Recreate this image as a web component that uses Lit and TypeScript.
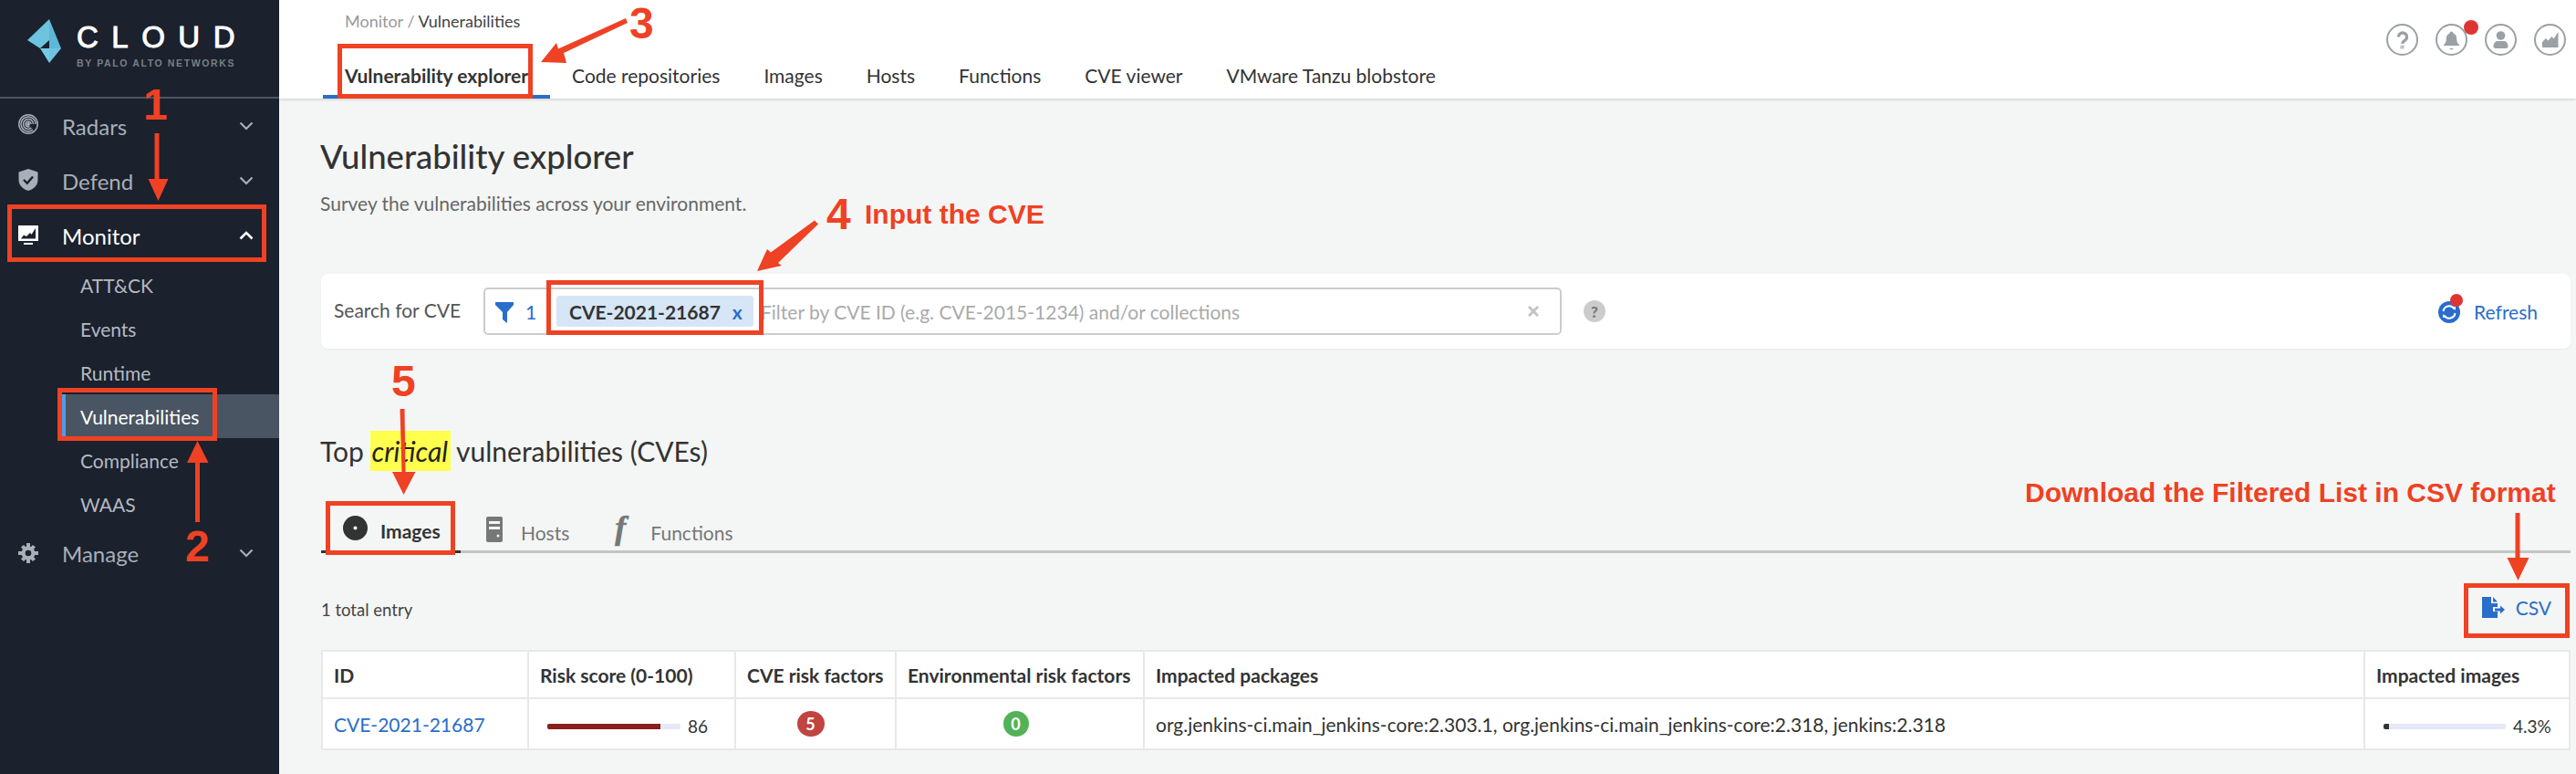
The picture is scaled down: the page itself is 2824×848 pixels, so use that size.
import { LitElement, html, css, svg } from "lit";
import { customElement } from "lit/decorators.js";

const chevDown = html`<svg class="chev" viewBox="0 0 16 10" width="16" height="10"><path d="M1.500 1.500 8 8l6.500-6.500" fill="none" stroke="currentColor" stroke-width="2.200"/></svg>`;
const chevUp = html`<svg class="chev up" viewBox="0 0 16 10" width="16" height="10"><path d="M1.500 8.500 8 2l6.500 6.500" fill="none" stroke="currentColor" stroke-width="2.600"/></svg>`;

const radarIcon = html`<svg class="nav-ico" style="margin-top:-4px" viewBox="0 0 22 24" width="22" height="24" fill="none" stroke="#a9afb8" stroke-width="1.500"><circle cx="11" cy="12" r="10.200"/><path d="M19 12a8 8 0 1 0-3 6.200M16.500 12a5.500 5.500 0 1 0-2 4.200M14 12a3 3 0 1 0-1.500 2.600"/><circle cx="11" cy="12" r="1.200" fill="#a9afb8"/></svg>`;
const shieldIcon = html`<svg class="nav-ico" style="margin-top:-2px" viewBox="0 0 22 24" width="22" height="24"><path d="M11 0 21.500 3.500V12c0 6-4.500 10-10.500 12C5 22 .5 18 .5 12V3.500Z" fill="#a9afb8"/><path d="M6 12l3.800 3.800L16 8.500" fill="none" stroke="#1b212d" stroke-width="2.400"/></svg>`;
const monitorIcon = html`<svg class="nav-ico" viewBox="0 0 22 24" width="22" height="24"><path d="M0 1h22v17H0Z" fill="#fff"/><path d="M3 15.500l3-4 3 1.500 4-4 1.500 2L19 4v11.500Z" fill="#1b212d"/><path d="M6 20h10v2H6Z" fill="#fff"/></svg>`;
const gearIcon = html`<svg class="nav-ico" viewBox="0 0 22 24" width="22" height="24"><g fill="#a9afb8"><circle cx="11" cy="12" r="7.500"/><path d="M9 1h4v4H9zM9 19h4v4H9zM0 10h4v4H0zM18 10h4v4h-4z"/><path d="M3 5.500 6 3l3 3-3 3zM19 5.500 16 3l-3 3 3 3zM3 18.500 6 21l3-3-3-3zM19 18.500 16 21l-3-3 3-3z"/></g><circle cx="11" cy="12" r="3.300" fill="#1b212d"/></svg>`;

const topIcons = [
  svg`<path d="M13.500 14.500a4.500 4.500 0 1 1 7 3.700c-1.900 1.200-2.700 1.800-2.700 3.800" fill="none" stroke="#9aa0a4" stroke-width="3.200"/><rect x="15.300" y="23.500" width="4.400" height="4" fill="#c3c6c8"/>`,
  svg`<path d="M17.500 8.500c1.200 0 2 .8 2 2 2.700.9 3.700 3.300 3.700 6 0 3 .8 5 2.800 6.500v1H9v-1c2-1.500 2.800-3.500 2.800-6.500 0-2.700 1-5.100 3.700-6 0-1.200.8-2 2-2Z" fill="#9aa0a4"/><path d="M15 27h5l-2.500 1.800Z" fill="#9aa0a4"/>`,
  svg`<circle cx="17.500" cy="13" r="4.800" fill="#9aa0a4"/><path d="M9.500 25c0-4.300 2.500-6 4.500-6h7c2 0 4.500 1.700 4.500 6 0 1.200-1 2-2.500 2H12c-1.500 0-2.500-.8-2.500-2Z" fill="#9aa0a4"/>`,
  svg`<path d="M9 26V20l4-4 2.500 2.500 4-4.500 2 2.500L26.500 9V26Z" fill="#9aa0a4"/>`,
];

type Box = [number, number, number, number];
const boxes: Box[] = [
  [8, 224, 284, 63],
  [63, 425, 175, 58],
  [370, 48, 214, 60],
  [599, 307, 238, 60],
  [357, 549, 142, 59],
  [2701, 639, 116, 60],
];
const numbers: [string, number, number][] = [
  ["1", 157, 91],
  ["2", 203, 575],
  ["3", 690, 2],
  ["4", 906, 211],
  ["5", 429, 394],
];

@customElement("app-root")
export class AppRoot extends LitElement {
  static styles = css`
    :host { display: block; width: 2824px; height: 848px; font-family: Lato, "Liberation Sans", sans-serif; color: #333; }
    * { box-sizing: border-box; }
    .page { position: relative; display: flex; width: 2824px; height: 848px; overflow: hidden; background: #f4f6f5; }

    .side { width: 306px; flex: none; background: #1b212d; color: #a9afb8; position: relative; }
    .brand { height: 108px; border-bottom: 2px solid #4d5560; display: flex; align-items: flex-start; padding: 20px 0 0 30px; gap: 17px; }
    .brand-text { display: flex; flex-direction: column; padding-top: 5px; }
    .cloud { font: 400 33px/32px "Liberation Sans", sans-serif; color: #fff; letter-spacing: 14.500px; white-space: nowrap; -webkit-text-stroke: 1px #fff; }
    .by { font: 700 10.500px/12px "Liberation Sans", sans-serif; color: #7b7f85; letter-spacing: 1.620px; white-space: nowrap; margin-top: 6px; }
    .nav { display: flex; flex-direction: column; }
    .top-item { height: 60px; display: flex; align-items: center; padding-left: 20px; font-size: 24px; }
    .top-item .nav-ico { flex: none; }
    .top-item .label { margin-left: 26px; flex: 1; }
    .top-item.open { color: #fff; }
    .chev { margin-right: 28px; flex: none; }
    .sub { height: 48px; display: flex; align-items: center; padding-left: 88px; font-size: 21px; color: #b4bac3; }
    .sub.on { background: #4a5563; color: #fff; border-left: 4px solid #4f9ceb; margin-left: 68px; padding-left: 16px; }
    .collapse { position: absolute; left: 306px; top: 0; width: 24px; height: 16px; background: #5aa5ea; border-bottom-right-radius: 6px; display: flex; justify-content: center; }

    .main { flex: 1; min-width: 0; display: flex; flex-direction: column; }
    .head { height: 108px; background: #fff; box-shadow: 0 1px 3px rgba(0,0,0,.18); padding: 11px 0 0 72px; position: relative; flex: none; }
    .crumb { font-size: 18px; line-height: 24px; color: #999; }
    .crumb b { font-weight: 400; color: #444; }
    .tabs { display: flex; margin: 26px 0 0 -24px; }
    .tab { font-size: 21px; line-height: 44px; height: 47px; padding: 0 24px; color: #333; white-space: nowrap; }
    .tab.on { font-weight: 700; border-bottom: 4px solid #2a6dcb; }
    .tools { position: absolute; right: 11px; top: 26px; display: flex; gap: 19px; }
    .tool { width: 35px; height: 35px; position: relative; }
    .dot { position: absolute; top: -4px; left: 31px; width: 16px; height: 16px; border-radius: 50%; background: #dd3632; }

    .content { flex: 1; padding: 41px 6px 0 45px; display: flex; flex-direction: column; }
    h1 { margin: 0; font-size: 36.500px; font-weight: 500; line-height: 44px; color: #333; }
    .subtitle { font-size: 21px; line-height: 30px; color: #666; margin-top: 15px; }
    .card { margin: 62px 0 0 1px; height: 82px; background: #fff; border-radius: 8px; box-shadow: 0 1px 2px rgba(0,0,0,.05); display: flex; align-items: center; padding-left: 14px; }
    .card-label { font-size: 21px; color: #555; width: 164px; margin-top: -3px; }
    .input { width: 1182px; height: 52px; border: 2px solid #ccc; border-radius: 5px; display: flex; align-items: center; padding-left: 11px; }
    .count { color: #2a6dcb; font-size: 21px; margin-left: 13px; width: 34px; }
    .chip { width: 216px; height: 34px; background: #d6e6f7; border-radius: 3px; display: flex; align-items: center; padding-left: 14px; gap: 13px; font-size: 21px; font-weight: 700; color: #333; margin-right: 8px; flex: none; }
    .chip i { font-style: normal; color: #2a6dcb; }
    .ph { color: #aaa; font-size: 21px; flex: 1; white-space: nowrap; }
    .clear { margin-right: 23px; flex: none; }
    .help { margin-left: 24px; width: 24px; height: 24px; border-radius: 50%; background: #ccc; color: #777; font-size: 17px; font-weight: 900; display: flex; align-items: center; justify-content: center; }
    .refresh { margin-left: auto; margin-right: 36px; display: flex; align-items: center; gap: 12px; color: #2a6dcb; font-size: 21px; }

    h2 { margin: 90px 0 0; font-size: 30px; font-weight: 400; line-height: 44px; color: #333; white-space: nowrap; }
    h2 em { background: #ffff4d; padding: 0 3px 0 2px; margin: 0 -1px; font-style: italic; color: #222; display: inline-block; }
    .subtabs { margin: 33px 0 0 1px; height: 57px; border-bottom: 3px solid #c4c4c4; display: flex; }
    .st { display: flex; align-items: center; height: 57px; font-size: 21px; color: #777; padding-top: 4px; }
    .st span { margin-top: 7px; }
    .st.on { width: 153px; padding-left: 24px; gap: 14px; font-weight: 700; color: #333; border-bottom: 3px solid #333; }
    .st.hosts { margin-left: 28px; gap: 20px; }
    .st.funcs { margin-left: 50px; gap: 19px; }
    .st .fn { font: italic 700 36px/36px "Liberation Serif", serif; color: #777; width: 20px; margin-top: -4px; -webkit-text-stroke: .6px #777; }
    .bar-row { margin: 33px 0 0 1px; height: 58px; display: flex; align-items: center; justify-content: space-between; }
    .total { font-size: 18.500px; color: #444; }
    .csv { display: flex; align-items: center; gap: 12px; color: #2a6dcb; font-size: 21px; padding-right: 21px; margin-top: -5px; }

    .table { margin: 15px 0 0 1px; width: 2466px; display: grid; grid-template-columns: 224px 225px 174px 270px 1336px 223px; gap: 2px; padding: 2px; background: #e8e8e8; }
    .th, .td { background: #fff; display: flex; align-items: center; padding-left: 12px; font-size: 21px; white-space: nowrap; }
    .th { height: 50px; font-weight: 700; color: #333; }
    .td { height: 54px; color: #333; }
    .link { color: #2a6dcb; }
    .risk { padding-left: 20px; }
    .track { height: 6px; background: #e4e8f8; border-radius: 2px; margin-right: 8px; margin-top: 6px; }
    .fill { height: 6px; border-radius: 2px 0 0 2px; }
    .val { font-size: 19px; margin-top: 4px; }
    .center { justify-content: center; padding-left: 0; }
    .shift-a { padding-right: 11px; }
    .shift-b { padding-right: 9px; }
    .badge { width: 30px; height: 28px; border-radius: 50%; color: #fff; font-size: 18px; font-weight: 700; display: flex; align-items: center; justify-content: center; }
    .red { background: #c0443f; }
    .green { background: #52b257; width: 28px; }

    .overlay { position: absolute; left: 0; top: 0; pointer-events: none; }
    .rbox { position: absolute; border: 5px solid #ef4123; }
    .num { position: absolute; font: 700 48px/48px "Liberation Sans", sans-serif; color: #ef4123; }
    .note { position: absolute; font: 700 30px/32px "Liberation Sans", sans-serif; color: #ef4123; white-space: nowrap; }
  `;

  render() {
    return html`
      <div class="page">
        <aside class="side">
          <div class="brand">
            <svg width="37" height="50" viewBox="0 0 37 50" style="flex:none">
              <path d="M0 24 24 1V24L14 33Z" fill="#6cc4df"/>
              <path d="M24 1 37 33H24Z" fill="#5db8d6"/>
              <path d="M14 33H24V49Z" fill="#74cbe4"/>
              <path d="M24 33H37L24 49Z" fill="#6cc4df"/>
            </svg>
            <div class="brand-text">
              <div class="cloud">CLOUD</div>
              <div class="by">BY PALO ALTO NETWORKS</div>
            </div>
          </div>
          <nav class="nav">
            <div class="top-item">${radarIcon}<span class="label">Radars</span>${chevDown}</div>
            <div class="top-item">${shieldIcon}<span class="label">Defend</span>${chevDown}</div>
            <div class="top-item open">${monitorIcon}<span class="label">Monitor</span>${chevUp}</div>
            <div class="sub">ATT&amp;CK</div>
            <div class="sub">Events</div>
            <div class="sub">Runtime</div>
            <div class="sub on">Vulnerabilities</div>
            <div class="sub">Compliance</div>
            <div class="sub">WAAS</div>
            <div class="top-item">${gearIcon}<span class="label">Manage</span>${chevDown}</div>
          </nav>
        </aside>
        <div class="collapse"><svg width="10" height="14" viewBox="0 0 10 14"><path d="M7 0 3 5l4 5" fill="none" stroke="#fff" stroke-width="1.500"/></svg></div>

        <div class="main">
          <header class="head">
            <div class="crumb">Monitor / <b>Vulnerabilities</b></div>
            <div class="tabs">
              <div class="tab on">Vulnerability explorer</div>
              <div class="tab">Code repositories</div>
              <div class="tab">Images</div>
              <div class="tab">Hosts</div>
              <div class="tab">Functions</div>
              <div class="tab">CVE viewer</div>
              <div class="tab">VMware Tanzu blobstore</div>
            </div>
            <div class="tools">
              ${topIcons.map((p, i) => html`<div class="tool"><svg width="35" height="35" viewBox="0 0 35 35"><circle cx="17.500" cy="17.500" r="16.500" fill="none" stroke="#9aa0a4" stroke-width="2"/>${p}</svg>${i === 1 ? html`<span class="dot"></span>` : ""}</div>`)}
            </div>
          </header>
          <section class="content">
            <h1>Vulnerability explorer</h1>
            <div class="subtitle">Survey the vulnerabilities across your environment.</div>
            <div class="card">
              <div class="card-label">Search for CVE</div>
              <div class="input">
                <svg width="20" height="27" viewBox="0 0 20 27" style="flex:none"><path d="M0 3h20v3l-7 8v12l-5-4v-8L0 6Z" fill="#2a6dcb"/></svg>
                <span class="count">1</span>
                <div class="chip">CVE-2021-21687 <i>x</i></div>
                <div class="ph">Filter by CVE ID (e.g. CVE-2015-1234) and/or collections</div>
                <svg class="clear" width="12" height="12" viewBox="0 0 12 12"><path d="M1 1l10 10M11 1 1 11" stroke="#c4c4c4" stroke-width="3"/></svg>
              </div>
              <div class="help">?</div>
              <div class="refresh">
                <svg width="27" height="32" viewBox="0 0 27 32" style="margin-top:-6px"><circle cx="12" cy="20" r="12" fill="#2a6dcb"/><path d="M5.500 19a6.500 6.500 0 0 1 12-2.500M18.500 21a6.500 6.500 0 0 1-12 2.500" fill="none" stroke="#fff" stroke-width="2"/><path d="M19 14h-4l4 4ZM5 26h4l-4-4Z" fill="#fff"/><circle cx="20" cy="7" r="7" fill="#dd3632"/></svg>
                <span>Refresh</span>
              </div>
            </div>
            <h2>Top <em>critical</em> vulnerabilities (CVEs)</h2>
            <div class="subtabs">
              <div class="st on"><svg width="27" height="27" viewBox="0 0 27 27"><circle cx="13.500" cy="13.500" r="13.500" fill="#333"/><circle cx="13.500" cy="13.500" r="2" fill="#fff"/></svg><span>Images</span></div>
              <div class="st hosts"><svg width="18" height="28" viewBox="0 0 18 28"><rect width="18" height="28" rx="2" fill="#777"/><path d="M3 5h12v3H3zM3 11h12v3H3z" fill="#f4f6f5"/><circle cx="13" cy="21" r="1.500" fill="#f4f6f5"/></svg><span>Hosts</span></div>
              <div class="st funcs"><span class="fn">f</span><span>Functions</span></div>
            </div>
            <div class="bar-row">
              <div class="total">1 total entry</div>
              <div class="csv">
                <svg width="25" height="23" viewBox="0 0 25 23"><path d="M0 0h10v7h7v4h-5v5h5v7H0ZM12 0l5 5.500h-5Z" fill="#2a6dcb"/><path d="M14 12.500h6V9.500l5 4.500-5 4.500v-3h-6Z" fill="#2a6dcb"/></svg>
                <span>CSV</span>
              </div>
            </div>
            <div class="table">
              <div class="th">ID</div>
              <div class="th">Risk score (0-100)</div>
              <div class="th">CVE risk factors</div>
              <div class="th">Environmental risk factors</div>
              <div class="th">Impacted packages</div>
              <div class="th">Impacted images</div>
              <div class="td link">CVE-2021-21687</div>
              <div class="td risk">
                <div class="track" style="width:146px"><div class="fill" style="width:124px;background:#8b1f1b"></div></div>
                <span class="val">86</span>
              </div>
              <div class="td center shift-a"><span class="badge red">5</span></div>
              <div class="td center shift-b"><span class="badge green">0</span></div>
              <div class="td">org.jenkins-ci.main_jenkins-core:2.303.1, org.jenkins-ci.main_jenkins-core:2.318, jenkins:2.318</div>
              <div class="td risk">
                <div class="track" style="width:134px"><div class="fill" style="width:6px;background:#333"></div></div>
                <span class="val">4.3%</span>
              </div>
            </div>
          </section>
        </div>

        <svg class="overlay" width="2824" height="848" viewBox="0 0 2824 848" fill="#ef4123" stroke="none">
          <path d="M169.500 146h5v50h10l-11 24-11-24h7Z"/>
          <path d="M214 572v-65h-9l11.500-24 12 24h-9.500v65Z"/>
          <path d="M686 20 688 25l-70 33 3 11-28-1 17-21 2 6.500Z"/>
          <path d="M893 241.500 897 245.500 853 288l4 3-27 6 11-24 4 3.500Z"/>
          <path d="M438.500 448h5l1 69h11l-13 25-12.500-25h10.500Z"/>
          <path d="M2757.500 562h5v49h10l-12 25-12-25h9Z"/>
        </svg>
        ${boxes.map(([x, y, w, h]) => html`<div class="rbox" style="left:${x}px;top:${y}px;width:${w}px;height:${h}px"></div>`)}
        ${numbers.map(([t, x, y]) => html`<div class="num" style="left:${x}px;top:${y}px">${t}</div>`)}
        <div class="note" style="left:948px;top:219px">Input the CVE</div>
        <div class="note" style="left:2220px;top:524px">Download the Filtered List in CSV format</div>
      </div>
    `;
  }
}
